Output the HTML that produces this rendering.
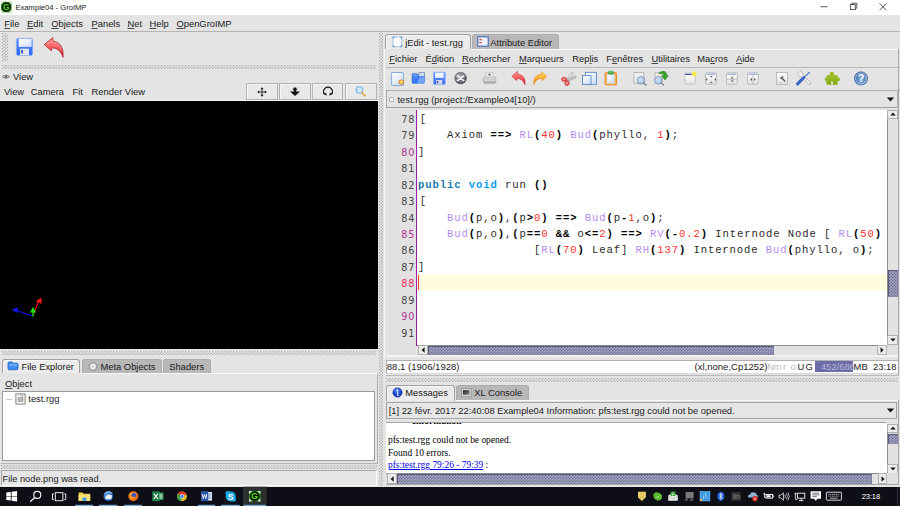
<!DOCTYPE html>
<html>
<head>
<meta charset="utf-8">
<title>Example04 - GroIMP</title>
<style>
html,body{margin:0;padding:0;}
body{width:900px;height:506px;overflow:hidden;background:#e4e4e4;font-family:"Liberation Sans",sans-serif;font-size:9.35px;color:#1a1a1a;position:relative;}
.a{position:absolute;}
.t{position:absolute;white-space:pre;line-height:12px;}
u{text-decoration:underline;text-underline-offset:1px;text-decoration-thickness:1px;text-decoration-color:#484848;}
.dots{position:absolute;background-color:#e9e9e9;background-image:radial-gradient(circle at 0.75px 0.75px,#b4b4b4 0.55px,rgba(180,180,180,0) 1.05px),radial-gradient(circle at 2.25px 2.25px,#b4b4b4 0.55px,rgba(180,180,180,0) 1.05px);background-size:3px 3px;}
.code{position:absolute;white-space:pre;font-family:"Liberation Mono",monospace;font-size:10.6px;letter-spacing:0.885px;line-height:16.45px;left:418.1px;color:#2a2a2a;height:16.45px;margin-top:1.1px;}
.ln{position:absolute;left:385px;width:30.3px;text-align:right;font-family:"DejaVu Sans","Liberation Sans",sans-serif;font-size:9.7px;letter-spacing:0.85px;line-height:16.45px;color:#484848;margin-top:2px;}
.k{color:#187aac;font-weight:bold;}
.k2{color:#0aa0f0;font-weight:bold;}
.f{color:#b48cf0;}
.n{color:#ff3030;}
.o{font-weight:bold;color:#000;}
.tab{position:absolute;box-sizing:border-box;border:1px solid #a0a0a0;border-bottom:none;border-radius:3px 3px 0 0;}
.tab.on{background:#ebebeb;box-shadow:inset 1px 1px 0 #f8f8f8;}
.tab.off{background:#b8b8b8;border-color:#acacac;}
.msg{position:absolute;white-space:pre;font-family:"Liberation Serif",serif;font-size:9.45px;line-height:12px;color:#000;}
.vbtn{box-sizing:border-box;background:#e8e8e8;border:1px solid #b2b2b2;box-shadow:inset 1px 1px 0 #f6f6f6;}
.sbtn{box-sizing:border-box;background:#ececec;border:1px solid #b0b0b0;}
.thumb{box-sizing:border-box;border:1px solid #5a5a76;border-right-color:#7c7c9c;border-bottom-color:#8c8cac;background-color:#a6a6c8;background-image:radial-gradient(circle at 0.75px 0.75px,#6e6e92 0.55px,rgba(110,110,146,0) 1px),radial-gradient(circle at 2.25px 2.25px,#6e6e92 0.55px,rgba(110,110,146,0) 1px);background-size:3px 3px;}
</style>
</head>
<body>
<!-- TITLE BAR -->
<div class="a" id="titlebar" style="left:0;top:0;width:900px;height:15px;background:#fff;"></div>
<svg class="a" style="left:0;top:0" width="14" height="15" viewBox="0 0 14 15"><rect x="1" y="1.8" width="10.6" height="10.6" fill="#2a8a18"/><path d="M1 1.8h2.8l-2.8 2.8zM11.6 1.8h-2.8l2.8 2.8zM1 12.4h2.8l-2.8-2.8zM11.6 12.4h-2.8l2.8-2.8z" fill="#e8f0e0"/><circle cx="6.3" cy="7.1" r="4.5" fill="#0a0a0a"/><text x="6.3" y="10.2" font-family="Liberation Sans, sans-serif" font-weight="bold" font-size="8.4" fill="#58e020" text-anchor="middle">G</text></svg>
<div class="t" style="left:15.5px;top:1.5px;font-size:7.6px;color:#222;line-height:12px;">Example04 - GroIMP</div>
<svg class="a" style="left:815px;top:0" width="85" height="15" viewBox="0 0 85 15" fill="none" stroke="#333" stroke-width="0.8">
<path d="M5.5 6.7h7"/><rect x="35.3" y="4.6" width="5" height="5"/><path d="M36.8 4.6v-1.4h5v5h-1.4"/><path d="M64.5 3.3l7 7M71.5 3.3l-7 7"/></svg>

<!-- MAIN MENU -->
<div class="a" style="left:0;top:15px;width:900px;height:16px;background:#e4e4e4;"></div>
<div class="a" style="left:0;top:31px;width:900px;height:1px;background:#b4b4b4;"></div>
<div class="t" style="left:4.3px;top:17.7px;"><u>F</u>ile</div>
<div class="t" style="left:27px;top:17.7px;"><u>E</u>dit</div>
<div class="t" style="left:51.3px;top:17.7px;"><u>O</u>bjects</div>
<div class="t" style="left:91.5px;top:17.7px;"><u>P</u>anels</div>
<div class="t" style="left:127.5px;top:17.7px;"><u>N</u>et</div>
<div class="t" style="left:149.5px;top:17.7px;"><u>H</u>elp</div>
<div class="t" style="left:176.5px;top:17.7px;"><u>O</u>penGroIMP</div>

<!-- MAIN TOOLBAR -->
<div class="dots" style="left:2px;top:33px;width:5.8px;height:28.6px;"></div>
<svg class="a" style="left:14px;top:36px" width="54" height="24" viewBox="0 0 54 24">
<defs><linearGradient id="sv" x1="0" y1="0" x2="0" y2="1"><stop offset="0" stop-color="#5a94ff"/><stop offset="1" stop-color="#2a62f4"/></linearGradient>
<linearGradient id="lb" x1="0" y1="0" x2="1" y2="1"><stop offset="0" stop-color="#ffffff"/><stop offset="1" stop-color="#d4dcff"/></linearGradient>
<linearGradient id="rd" x1="0" y1="0" x2="0" y2="1"><stop offset="0" stop-color="#ff8c8c"/><stop offset="0.4" stop-color="#ff6a6a"/><stop offset="1" stop-color="#c41222"/></linearGradient></defs>
<rect x="2.4" y="2.4" width="16.2" height="17" rx="1.6" fill="url(#sv)" stroke="#86aaff" stroke-width="0.8"/>
<rect x="4.7" y="2.9" width="12.9" height="8" fill="url(#lb)"/>
<rect x="6" y="12.7" width="9" height="6.6" fill="#e0e2ee"/><rect x="7.2" y="14" width="1.8" height="3.4" fill="#2a4ce0"/>
<path d="M30.300 8.600 L38.800 1.600 L39 5.200 C46 5.800 50 12 49 21.400 C47 15.500 44 12.200 38 11.800 L37.400 14.800 Z" fill="url(#rd)" stroke="#a81622" stroke-width="0.7" stroke-linejoin="round"/>
<path d="M33 8.400 L38 4.400 L38.200 6.400 C43 6.800 46 10 47 14" fill="none" stroke="#ffb4b4" stroke-width="0.9" opacity="0.8"/>
</svg>

<!-- LEFT PANEL -->
<div class="dots" style="left:2px;top:65px;width:374px;height:4px;"></div>
<svg class="a" style="left:2px;top:73.6px" width="8" height="6.4" viewBox="0 0 10 8"><path d="M0.6 3.6 Q5 -0.6 9.4 3.6 Q5 7.2 0.6 3.6Z" fill="none" stroke="#555" stroke-width="1"/><circle cx="5" cy="3.4" r="1.4" fill="#555"/></svg>
<div class="t" style="left:13px;top:70.5px;">View</div>
<div class="t" style="left:4px;top:85.6px;">View</div>
<div class="t" style="left:30.8px;top:85.6px;">Camera</div>
<div class="t" style="left:72.5px;top:85.6px;">Fit</div>
<div class="t" style="left:91.6px;top:85.6px;">Render View</div>
<div class="a vbtn" style="left:246px;top:83px;width:31.6px;height:16.7px;"></div>
<div class="a vbtn" style="left:279.2px;top:83px;width:31.6px;height:16.7px;"></div>
<div class="a vbtn" style="left:312.3px;top:83px;width:31.2px;height:16.7px;"></div>
<div class="a vbtn" style="left:345.3px;top:83px;width:31.7px;height:16.7px;"></div>
<svg class="a" style="left:257.2px;top:86.5px" width="10" height="10" viewBox="0 0 12 12"><path d="M6 1.600v8.800M1.600 6h8.800" stroke="#111" stroke-width="1"/><path d="M6 0.300l1.900 2.300h-3.800zM6 11.700l1.900-2.300h-3.800zM0.300 6l2.300-1.900v3.800zM11.700 6l-2.300-1.900v3.800z" fill="#111"/></svg>
<svg class="a" style="left:289px;top:86px" width="12" height="12" viewBox="0 0 12 12"><path d="M4.7 1.5h2.6v4.3h-2.6z" fill="#111"/><path d="M3.7 2.7h4.6v1h-4.6z" fill="#111"/><path d="M1 5.6h10L6 9.9z" fill="#111"/></svg>
<svg class="a" style="left:322.1px;top:85.3px" width="12" height="12" viewBox="0 0 12 12"><path d="M2.6 9.4 A4.4 4.4 0 1 1 9.4 9.4" fill="none" stroke="#111" stroke-width="1.3"/><path d="M0.8 8.2h3.6v2.6zM11.2 8.2h-3.6v2.6z" fill="#111"/></svg>
<svg class="a" style="left:354px;top:85px" width="14" height="13" viewBox="0 0 14 13"><circle cx="5.4" cy="5" r="3.3" fill="#cfe6fa" stroke="#7eb4e6" stroke-width="1.1"/><path d="M7.9 7.6l3.3 3.3" stroke="#e8a848" stroke-width="1.7" stroke-linecap="round"/></svg>
<div class="a" style="left:0;top:99.8px;width:377.5px;height:1px;background:#f6f6f6;"></div>
<div class="a" style="left:0;top:100.7px;width:377.5px;height:248.5px;background:#000;"></div>
<svg class="a" style="left:8px;top:292px" width="40" height="30" viewBox="0 0 40 30">
<path d="M25 23.5 L31 8" stroke="#e01010" stroke-width="1.2"/><path d="M27.6 9.2 L33.4 5.4 L33.6 12 Z" fill="#f01818"/>
<path d="M25 24 L8 18.5" stroke="#1010f0" stroke-width="1.2"/><path d="M4 17.2 L10.2 15.6 L8.8 21.2 Z" fill="#1414ff"/>
<path d="M25 24.5 L25 18" stroke="#10c010" stroke-width="1.6"/><path d="M22 20.5 L25 14.8 L28 20.5 Z" fill="#14e014"/>
</svg>
<div class="dots" style="left:2px;top:351px;width:374px;height:4px;"></div>

<!-- left-bottom tabs -->
<div class="tab on" style="left:1.8px;top:358.8px;width:78.7px;height:14.7px;"></div>
<div class="tab off" style="left:81.5px;top:358.8px;width:80.5px;height:14.2px;"></div>
<div class="tab off" style="left:163px;top:358.8px;width:48px;height:14.2px;"></div>
<div class="a" style="left:80.5px;top:372.900px;width:296.500px;height:1px;background:#f8f8f8;"></div>
<div class="a" style="left:376.600px;top:373.500px;width:1px;height:90px;background:#b0b0b0;"></div>
<div class="a" style="left:1px;top:462.600px;width:376px;height:1px;background:#b4b4b4;"></div>
<div class="t" style="left:21.5px;top:360.5px;">File Explorer</div>
<div class="t" style="left:100.5px;top:360.5px;">Meta Objects</div>
<div class="t" style="left:169.3px;top:360.5px;">Shaders</div>
<svg class="a" style="left:7px;top:361px" width="12" height="10" viewBox="0 0 12 10"><path d="M1 2.2 Q1 1 2.2 1 H5 L6 2.2 H9.8 Q11 2.2 11 3.4 V7.6 Q11 8.8 9.8 8.8 H2.2 Q1 8.8 1 7.6Z" fill="#3f8df0" stroke="#1c5fc0" stroke-width="0.8"/><path d="M2 4h8" stroke="#9cc8ff" stroke-width="1"/></svg>
<svg class="a" style="left:87px;top:360.6px" width="12" height="11" viewBox="0 0 12 11"><circle cx="6" cy="5.5" r="3.6" fill="none" stroke="#9a9a9a" stroke-width="2.4" stroke-dasharray="1.7 1.13"/><circle cx="6" cy="5.5" r="3.1" fill="#fafafa" stroke="#a8a8a8" stroke-width="0.6"/><circle cx="6" cy="5.5" r="1.1" fill="#d8d8d8" stroke="#a8a8a8" stroke-width="0.4"/></svg>
<div class="t" style="left:5px;top:377.9px;"><u>O</u>bject</div>
<div class="a" style="left:1.5px;top:391px;width:373.5px;height:69.5px;background:#fff;border:1px solid #9a9a9a;box-sizing:border-box;"></div>
<div class="a" style="left:6px;top:398.5px;width:6px;height:1px;background:#c0c8d8;"></div>
<svg class="a" style="left:14.5px;top:393px" width="11" height="12" viewBox="0 0 11 12"><rect x="0.9" y="0.9" width="9.2" height="10.2" fill="#f4f4f4" stroke="#666" stroke-width="0.8"/><rect x="3" y="4.8" width="5" height="3.6" fill="#bbb" stroke="#777" stroke-width="0.5"/><path d="M4.6 2.2h3v2.4" fill="none" stroke="#888" stroke-width="0.6"/></svg>
<div class="t" style="left:28.3px;top:392.8px;">test.rgg</div>
<div class="dots" style="left:0.5px;top:465px;width:376px;height:4.2px;"></div>
<div class="a" style="left:0.5px;top:470.4px;width:376.5px;height:15.2px;border:1px solid #a8a8a8;border-right-color:#fafafa;border-bottom-color:#fafafa;box-sizing:border-box;background:#e6e6e6;"></div>
<div class="t" style="left:2.5px;top:472.8px;font-size:9.25px;">File node.png was read.</div>

<!-- VERTICAL DIVIDER -->
<div class="dots" style="left:378.5px;top:33px;width:4.5px;height:453px;"></div>

<!-- RIGHT PANEL : jEdit -->
<div class="tab on" style="left:385px;top:34.2px;width:85.8px;height:15.3px;"></div>
<div class="tab off" style="left:471.7px;top:34.2px;width:87.8px;height:14.8px;"></div>
<div class="a" style="left:470.800px;top:48.800px;width:427.500px;height:1px;background:#f8f8f8;"></div>
<div class="a" style="left:384.4px;top:49px;width:1px;height:310px;background:#f6f6f6;"></div>
<svg class="a" style="left:392px;top:35.500px" width="11" height="12" viewBox="0 0 11 12"><rect x="1" y="0.900" width="8.800" height="9.800" rx="0.800" fill="#fbfcfe" stroke="#9abce6" stroke-width="0.900"/><path d="M1 2.500v-1.600h1.600M8.200 0.900h1.600v1.600M9.800 9.100v1.600h-1.600M2.600 10.700h-1.600v-1.600" fill="none" stroke="#5a88cc" stroke-width="0.900"/></svg>
<div class="t" style="left:405.3px;top:36.6px;">jEdit - test.rgg</div>
<svg class="a" style="left:476.5px;top:36px" width="12" height="11" viewBox="0 0 12 11"><rect x="0.8" y="0.8" width="10.4" height="9.4" fill="#e8ecf8" stroke="#3a5fb8" stroke-width="1"/><path d="M2.4 3.6h2.4M2.4 6.6h2.4" stroke="#e05030" stroke-width="1.2"/><path d="M5.6 3.6h4M5.6 6.6h4" stroke="#fff" stroke-width="1.2"/></svg>
<div class="t" style="left:490.3px;top:36.6px;">Attribute Editor</div>

<div class="t" style="left:389.3px;top:52.9px;"><u>F</u>ichier</div>
<div class="t" style="left:425.5px;top:52.9px;">É<u>d</u>ition</div>
<div class="t" style="left:462px;top:52.9px;"><u>R</u>echercher</div>
<div class="t" style="left:519px;top:52.9px;"><u>M</u>arqueurs</div>
<div class="t" style="left:572.3px;top:52.9px;">Rep<u>l</u>is</div>
<div class="t" style="left:606.3px;top:52.9px;">F<u>e</u>nêtres</div>
<div class="t" style="left:651.5px;top:52.9px;"><u>U</u>tilitaires</div>
<div class="t" style="left:697.3px;top:52.9px;">Ma<u>c</u>ros</div>
<div class="t" style="left:736px;top:52.9px;"><u>A</u>ide</div>
<div class="a" style="left:386px;top:66.5px;width:514px;height:1px;background:#b8b8b8;"></div>
<svg class="a" style="left:386px;top:67px" width="514" height="23" viewBox="386 67 514 23">
<defs>
<linearGradient id="pg" x1="0" y1="0" x2="1" y2="1"><stop offset="0" stop-color="#ffffff"/><stop offset="1" stop-color="#c8dcf4"/></linearGradient>
<linearGradient id="prn" x1="0" y1="0" x2="0" y2="1"><stop offset="0" stop-color="#dcdcdc"/><stop offset="0.500" stop-color="#c4c4c4"/><stop offset="1" stop-color="#a4a4a4"/></linearGradient>
<radialGradient id="lens" cx="0.400" cy="0.400" r="0.700"><stop offset="0" stop-color="#d4e6f8"/><stop offset="1" stop-color="#94b8e0"/></radialGradient>
<linearGradient id="win" x1="0" y1="0" x2="0" y2="1"><stop offset="0" stop-color="#ffffff"/><stop offset="1" stop-color="#e2e2e2"/></linearGradient>
<linearGradient id="pz" x1="0" y1="0" x2="0" y2="1"><stop offset="0" stop-color="#a8c828"/><stop offset="1" stop-color="#86aa14"/></linearGradient>
<linearGradient id="bl2" x1="0" y1="0" x2="0" y2="1"><stop offset="0" stop-color="#6a9cff"/><stop offset="1" stop-color="#3466f2"/></linearGradient>
<linearGradient id="bl" x1="0" y1="0" x2="0" y2="1"><stop offset="0" stop-color="#6aa6ff"/><stop offset="1" stop-color="#1450d8"/></linearGradient>
<linearGradient id="rd2" x1="0" y1="0" x2="0" y2="1"><stop offset="0" stop-color="#ff9090"/><stop offset="0.4" stop-color="#ff6a6a"/><stop offset="1" stop-color="#c41222"/></linearGradient>
<linearGradient id="or" x1="0" y1="0" x2="0" y2="1"><stop offset="0" stop-color="#ffd478"/><stop offset="0.4" stop-color="#ffb840"/><stop offset="1" stop-color="#ec8408"/></linearGradient>
<radialGradient id="gy" cx="0.4" cy="0.35" r="0.7"><stop offset="0" stop-color="#b4b4c0"/><stop offset="0.600" stop-color="#72727e"/><stop offset="1" stop-color="#44444e"/></radialGradient>
<radialGradient id="hb" cx="0.55" cy="0.6" r="0.75"><stop offset="0" stop-color="#86b0de"/><stop offset="1" stop-color="#2a589c"/></radialGradient>
</defs>
<rect x="391.6" y="72.5" width="11.8" height="13" rx="0.6" fill="url(#pg)" stroke="#6a98d4" stroke-width="0.8"/>
<path d="M401.3 78.400l1.100 2.100 2.300-.400-1.300 2 1.300 2-2.300-.400-1.100 2.100-1.100-2.100-2.300.400 1.300-2-1.300-2 2.300.400z" fill="#e08a38"/><circle cx="401.3" cy="82.100" r="1.500" fill="#ffe45c"/>
<path d="M412 74.300 q0-.900 .900-.900 h3.800 l1.200 1.400 h6.400 v7.400 q0 .900 -.900 .900 h-10.500 q-.900 0 -.900 -.900z" fill="url(#bl)" stroke="#0e3ca8" stroke-width="0.400"/><rect x="418.900" y="72.500" width="5.600" height="6.700" fill="#cadcf6" stroke="#56647e" stroke-width="0.500"/>
<path d="M412.200 77.200 h5.600 l1-1.200 h5.600 v7 q0 .800 -.800 .800 h-10.600 q-.800 0 -.800 -.800z" fill="#3f82f4" opacity="0.800"/><path d="M418 80 q3.500-2.600 6.300-2.400 v5.500 q0 .700-.700 .700 h-5.600z" fill="#9cc4ff" opacity="0.550"/>
<rect x="433.400" y="72.100" width="11.900" height="12.300" rx="0.900" fill="url(#bl2)" stroke="#96b4ff" stroke-width="0.700"/><rect x="435" y="72.700" width="8.700" height="5.200" fill="#eef2ff"/><rect x="436.300" y="80" width="5.900" height="4.300" fill="#dcdce6"/><rect x="437.100" y="81" width="1.200" height="2.300" fill="#2a50d8"/>
<circle cx="460.600" cy="78.100" r="5.900" fill="url(#gy)" stroke="#4a4a56" stroke-width="0.500"/><path d="M457.500 75.800l6.200 4.800M463.700 75.800l-6.200 4.800" stroke="#f6f6f6" stroke-width="1.700" stroke-linecap="round"/>
<rect x="485.800" y="72.300" width="7.400" height="5.600" fill="#e8e8e8" stroke="#bcbcbc" stroke-width="0.500"/><path d="M489.500 73.300v2.600M488.300 74.500h2.400" stroke="#555" stroke-width="0.700"/><rect x="483.200" y="77" width="12.800" height="6.200" rx="1.400" fill="url(#prn)" stroke="#9c9c9c" stroke-width="0.400"/><path d="M484 80.300h11.200" stroke="#ececec" stroke-width="0.700"/><path d="M484.600 83.700h10" stroke="#bdbdbd" stroke-width="1"/>
<path d="M511.8 76.3 L517.6 71.4 L517.4 74 C523 74.6 525.8 78.6 525 84.8 C523.4 80.6 521.2 78.6 517 78.4 L516.6 80.6 Z" fill="url(#rd2)" stroke="#c01420" stroke-width="0.5" stroke-linejoin="round"/>
<path d="M547 76.3 L541.2 71.4 L541.4 74 C535.8 74.6 533 78.6 533.8 84.8 C535.4 80.6 537.6 78.6 541.8 78.4 L542.2 80.6 Z" fill="url(#or)" stroke="#e08a18" stroke-width="0.5" stroke-linejoin="round"/>
<path d="M571.800 72 L573.300 73 L568 81.600 L566 80.400Z" fill="#ececec" stroke="#909090" stroke-width="0.500"/><path d="M575.700 75.900 L576 77.700 L566.400 81.800 L565.600 80Z" fill="#c8c8c8" stroke="#8c8c8c" stroke-width="0.500"/><ellipse cx="564" cy="79.300" rx="2.500" ry="2" fill="#e85a5a" stroke="#cc2a34" stroke-width="0.700"/><ellipse cx="564" cy="79.300" rx="0.900" ry="0.700" fill="#f4c8c8"/><ellipse cx="567" cy="83.100" rx="2.200" ry="2.500" fill="#e85a5a" stroke="#cc2a34" stroke-width="0.700"/><ellipse cx="567" cy="83.100" rx="0.800" ry="0.900" fill="#f4c8c8"/>
<rect x="585.6" y="72.3" width="11" height="12" fill="url(#pg)" stroke="#4a80c8" stroke-width="0.8"/><rect x="582.4" y="75.6" width="8.6" height="9" fill="url(#pg)" stroke="#4a80c8" stroke-width="0.8"/>
<rect x="605.200" y="72.800" width="11.200" height="12" rx="0.400" fill="#f8b860" stroke="#ee8418" stroke-width="1"/><rect x="607" y="74.400" width="7.600" height="9.200" fill="url(#pg)" stroke="#b8c8e0" stroke-width="0.400"/><rect x="608.300" y="71.200" width="5.200" height="3" rx="1.200" fill="#34b444" stroke="#248a34" stroke-width="0.400"/><path d="M609.300 72.100h3.200" stroke="#a4eaa8" stroke-width="0.600"/>
<rect x="634" y="72.400" width="9.800" height="10.800" fill="#f0f0f0" stroke="#a6a6a6" stroke-width="0.700"/><circle cx="640.900" cy="80.300" r="3.800" fill="url(#lens)" stroke="#8090a8" stroke-width="0.800"/><path d="M643.900 83.200l2.200 1.900" stroke="#808088" stroke-width="1.400" stroke-linecap="round"/>
<rect x="655" y="72.400" width="7" height="9" fill="#f0f0f0" stroke="#a6a6a6" stroke-width="0.700"/><path d="M658.400 74 C661.500 69.600 667.400 70.800 666.800 75.800 L668.400 75.800 L665 80 L661.600 75.800 L663.600 75.800 C663.800 73.600 661.600 72.800 658.400 74Z" fill="#3aa42a" stroke="#207818" stroke-width="0.500"/><circle cx="658.400" cy="80.300" r="3.900" fill="url(#lens)" stroke="#8090a8" stroke-width="0.800"/><path d="M661.500 83.200l2.100 1.800" stroke="#808088" stroke-width="1.400" stroke-linecap="round"/>
<rect x="684.700" y="73.300" width="10.600" height="10.800" rx="0.600" fill="url(#win)" stroke="#b8b8b8" stroke-width="0.700"/><path d="M685 74.300h8" stroke="#2848a0" stroke-width="1.100"/><circle cx="694.200" cy="74" r="2.900" fill="#fff27a" opacity="0.500"/><circle cx="694.200" cy="74" r="1.900" fill="#ffe838"/>
<rect x="705.500" y="72.800" width="10.800" height="11.400" rx="0.800" fill="url(#win)" stroke="#a8a8a8" stroke-width="0.700"/><path d="M706.400 74.200h9" stroke="#7090c8" stroke-width="0.900"/><path d="M709.900 76l1.400 1.500 1.400-1.500zM709.900 82.900l1.400-1.500 1.400 1.500zM706.100 78.100l1.600 1.400-1.600 1.400zM716 78.100l-1.600 1.400 1.600 1.400z" fill="#5c5c5c"/>
<rect x="726.500" y="72.800" width="10.800" height="11.400" rx="0.800" fill="url(#win)" stroke="#a8a8a8" stroke-width="0.700"/><path d="M727.400 74.200h9" stroke="#7090c8" stroke-width="0.900"/><path d="M727 79.400h10" stroke="#9a9a9a" stroke-width="0.500"/><path d="M730.700 78.500l1.500-1.900 1.500 1.900zM730.700 80.400l1.500 1.900 1.500-1.900z" fill="#5c5c5c"/>
<rect x="747.500" y="72.800" width="10.800" height="11.400" rx="0.800" fill="url(#win)" stroke="#a8a8a8" stroke-width="0.700"/><path d="M748.400 74.200h9" stroke="#7090c8" stroke-width="0.900"/><path d="M752.900 75v9" stroke="#9a9a9a" stroke-width="0.500"/><path d="M752 78l-1.900 1.500 1.900 1.500zM753.900 78l1.900 1.500-1.900 1.500z" fill="#5c5c5c"/>
<rect x="776.600" y="72.500" width="10.800" height="11.800" fill="url(#win)" stroke="#b0b0b0" stroke-width="0.800"/><path d="M781.400 77.400 l3.400 3.600" stroke="#5a5a5a" stroke-width="1.400" stroke-linecap="round"/><path d="M780 77.800 a1.500 1.500 0 1 0 2-2" fill="none" stroke="#5a5a5a" stroke-width="1"/><path d="M778.200 82.800h4" stroke="#cccccc" stroke-width="0.700"/>
<path d="M801 75 L809.400 83.200" stroke="#9c9c9c" stroke-width="3" stroke-linecap="round"/><circle cx="800.400" cy="73.900" r="2.500" fill="#f2f2f2" stroke="#9c9c9c" stroke-width="0.600"/><path d="M801 75 L809.400 83.200" stroke="#f2f2f2" stroke-width="1.900" stroke-linecap="round"/><path d="M800.300 73.800 L797.600 71.100" stroke="#e4e4e4" stroke-width="1.600"/><path d="M809.500 72.300 L804 77.400" stroke="#4a78c0" stroke-width="1.200" stroke-linecap="round"/><path d="M803.600 77.800 L797.600 83.900" stroke="#2a5cc0" stroke-width="3" stroke-linecap="round"/><path d="M803 78.400 L798 83.500" stroke="#86acf0" stroke-width="0.700" stroke-dasharray="1 0.600"/>
<path d="M826.700 75.600h4.300 a2 2 0 1 1 2 0 h4.300 v2.600 a1.600 1.600 0 1 1 0 2.400 v3.900 h-10.600 v-3.900 a1.300 1.300 0 1 1 0-2.400z" fill="url(#pz)" stroke="#86a614" stroke-width="0.400"/><path d="M831.300 84.400 v-1.200 a1.100 1.100 0 1 1 1.500 0 v1.200z" fill="#e8ecd8"/>
<circle cx="861" cy="78.400" r="6.700" fill="url(#hb)" stroke="#2c5694" stroke-width="0.500"/><circle cx="861" cy="78.400" r="5.500" fill="none" stroke="#e4ecf8" stroke-width="0.700" opacity="0.800"/>
<text x="861.100" y="82.300" font-family="Liberation Sans, sans-serif" font-weight="bold" font-size="10.800" fill="#fff" text-anchor="middle">?</text>
</svg>
<div class="a" style="left:385.5px;top:90.2px;width:514.5px;height:1px;background:#acacac;"></div>
<div class="a" style="left:385.5px;top:90.2px;width:1px;height:18px;background:#acacac;"></div>

<div class="a" style="left:898px;top:49px;width:1px;height:326.5px;background:#a8a8a8;"></div>
<div class="a" style="left:386px;top:375px;width:513px;height:1px;background:#b8b8b8;"></div>
<div class="a" style="left:898px;top:400px;width:1px;height:85px;background:#a8a8a8;"></div>
<!-- buffer selector -->
<div class="a" style="left:389.4px;top:96.7px;width:5px;height:5px;border:0.8px solid #b0b0b0;border-radius:1px;background:#fcfcfc;box-sizing:border-box;"></div>
<div class="t" style="left:397.5px;top:94px;">test.rgg (project:/Example04[10]/)</div>
<svg class="a" style="left:886px;top:97px" width="9" height="5" viewBox="0 0 9 5"><path d="M0.8 0.6h7.4L4.5 4.4Z" fill="#111"/></svg>
<div class="a" style="left:385.5px;top:107px;width:511.5px;height:1px;background:#a2a2a2;"></div>
<div class="a" style="left:896.5px;top:91px;width:1px;height:17px;background:#b0b0b0;"></div>

<!-- editor -->
<div class="a" style="left:386px;top:109.5px;width:501px;height:236px;background:#fff;"></div>
<div class="a" style="left:386px;top:109.5px;width:30px;height:246px;background:#e1e1e1;"></div>
<div class="a" style="left:415.9px;top:109.5px;width:1.3px;height:236px;background:#a218a8;"></div>
<div class="a" style="left:417px;top:274.3px;width:470px;height:16.4px;background:#fffce0;"></div>
<div class="a" style="left:417.6px;top:275px;width:1px;height:15px;background:#f04444;"></div>
<div class="ln" style="top:109.80px;">78</div>
<div class="code" style="top:109.80px;padding-left:1.6px;">[</div>
<div class="ln" style="top:126.25px;">79</div>
<div class="code" style="top:126.25px;">    Axiom <span class="o">==&gt;</span> <span class="f">RL</span><span class="o">(</span><span class="n">40</span><span class="o">)</span> <span class="f">Bud</span><span class="o">(</span>phyllo, <span class="n">1</span><span class="o">)</span>;</div>
<div class="ln" style="top:142.70px;color:#b43494;">80</div>
<div class="code" style="top:142.70px;">]</div>
<div class="ln" style="top:159.15px;">81</div>
<div class="ln" style="top:175.60px;">82</div>
<div class="code" style="top:175.60px;"><span class="k">public</span> <span class="k2">void</span> run <span class="o">()</span></div>
<div class="ln" style="top:192.05px;">83</div>
<div class="code" style="top:192.05px;padding-left:1.6px;">[</div>
<div class="ln" style="top:208.50px;">84</div>
<div class="code" style="top:208.50px;">    <span class="f">Bud</span><span class="o">(</span>p,o<span class="o">)</span>,<span class="o">(</span>p<span class="o">&gt;</span><span class="n">0</span><span class="o">)</span> <span class="o">==&gt;</span> <span class="f">Bud</span><span class="o">(</span>p<span class="o">-</span><span class="n">1</span>,o<span class="o">)</span>;</div>
<div class="ln" style="top:224.95px;color:#b43494;">85</div>
<div class="code" style="top:224.95px;">    <span class="f">Bud</span><span class="o">(</span>p,o<span class="o">)</span>,<span class="o">(</span>p<span class="o">==</span><span class="n">0</span> <span class="o">&amp;&amp;</span> o<span class="o">&lt;=</span><span class="n">2</span><span class="o">)</span> <span class="o">==&gt;</span> <span class="f">RV</span><span class="o">(-</span><span class="n">0.2</span><span class="o">)</span> Internode Node [ <span class="f">RL</span><span class="o">(</span><span class="n">50</span><span class="o">)</span></div>
<div class="ln" style="top:241.40px;">86</div>
<div class="code" style="top:241.40px;">                [<span class="f">RL</span><span class="o">(</span><span class="n">70</span><span class="o">)</span> Leaf] <span class="f">RH</span><span class="o">(</span><span class="n">137</span><span class="o">)</span> Internode <span class="f">Bud</span><span class="o">(</span>phyllo, o<span class="o">)</span>;</div>
<div class="ln" style="top:257.85px;">87</div>
<div class="code" style="top:257.85px;">]</div>
<div class="ln" style="top:274.30px;color:#f03058;">88</div>
<div class="ln" style="top:290.75px;">89</div>
<div class="ln" style="top:307.20px;color:#b43494;">90</div>
<div class="ln" style="top:323.65px;">91</div>

<!-- editor scrollbars -->
<div class="a" style="left:887px;top:109.5px;width:10.5px;height:236px;background:#e2e2e2;border-left:1px solid #8c8c8c;box-sizing:border-box;"></div>
<div class="a sbtn" style="left:887px;top:109.5px;width:10.5px;height:9.5px;"></div>
<svg class="a" style="left:889.75px;top:112.05px" width="6" height="4.2" viewBox="0 0 7 5"><path d="M0.3 4.3h6.4L3.5 0.7Z" fill="#111"/></svg>
<div class="a thumb" style="left:887.5px;top:270.4px;width:10px;height:27px;"></div>
<div class="a sbtn" style="left:887px;top:335px;width:10.5px;height:10px;"></div>
<svg class="a" style="left:889.75px;top:338.45px" width="6" height="4.2" viewBox="0 0 7 5"><path d="M0.3 0.7h6.4L3.5 4.3Z" fill="#111"/></svg>
<div class="a" style="left:417px;top:345.3px;width:470px;height:9.7px;background:#e2e2e2;border-top:1px solid #8c8c8c;box-sizing:border-box;"></div>
<div class="a sbtn" style="left:418.4px;top:345.3px;width:10px;height:9.7px;"></div>
<svg class="a" style="left:421.05px;top:347.35px" width="4.2" height="6" viewBox="0 0 5 7"><path d="M4.3 0.3v6.4L0.7 3.5Z" fill="#111"/></svg>
<div class="a thumb" style="left:428.4px;top:345.8px;width:345.4px;height:9px;"></div>
<div class="a sbtn" style="left:877px;top:345.3px;width:10px;height:9.7px;"></div>
<svg class="a" style="left:880.45px;top:347.35px" width="4.2" height="6" viewBox="0 0 5 7"><path d="M0.7 0.3v6.4L4.3 3.5Z" fill="#111"/></svg>
<div class="a" style="left:887px;top:345.3px;width:10.5px;height:9.7px;background:#e0e0e0;"></div>

<div class="a" style="left:386px;top:355.2px;width:512px;height:1.4px;background:#f3f3f3;"></div>
<!-- jEdit status -->
<div class="a" style="left:386px;top:359.500px;width:512px;height:14.600px;background:#fff;border:1px solid #b0b0b0;border-right:none;border-bottom-color:#d8d8d8;box-sizing:border-box;"></div>
<div class="t" style="left:386.8px;top:361px;font-size:9.55px;">88,1 (1906/1928)</div>
<div class="t" style="left:694.6px;top:361px;font-size:9.5px;">(xl,none,Cp1252)</div>
<div class="t" style="left:767.3px;top:361px;color:#bcbcbc;">N</div>
<div class="t" style="left:773.6px;top:361px;color:#bcbcbc;">m</div>
<div class="t" style="left:783px;top:361px;color:#bcbcbc;">r</div>
<div class="t" style="left:790.5px;top:361px;color:#bcbcbc;">o</div>
<div class="t" style="left:797.6px;top:361px;">U</div>
<div class="t" style="left:805.6px;top:361px;">G</div>
<div class="a" style="left:815.2px;top:361.200px;width:37.600px;height:10.800px;background:#6c6ca8;"></div>
<div class="t" style="left:821px;top:361px;color:#b9b9dc;">452/686</div>
<div class="t" style="left:853.6px;top:361px;">MB</div>
<div class="t" style="left:873px;top:361px;">23:18</div>

<!-- bottom right -->
<div class="dots" style="left:386px;top:377.600px;width:512px;height:4.200px;"></div>
<div class="tab on" style="left:385.6px;top:385px;width:69.6px;height:15.5px;"></div>
<div class="tab off" style="left:456px;top:385px;width:73px;height:15px;"></div>
<div class="a" style="left:455px;top:399.800px;width:443px;height:1px;background:#f8f8f8;"></div>
<svg class="a" style="left:391.700px;top:387px" width="11" height="11" viewBox="0 0 11 11"><defs><radialGradient id="inf" cx="0.450" cy="0.300" r="0.800"><stop offset="0" stop-color="#5a8cf0"/><stop offset="0.500" stop-color="#2048d0"/><stop offset="1" stop-color="#0c249c"/></radialGradient></defs><circle cx="5.500" cy="5.500" r="4.700" fill="url(#inf)" stroke="#10289c" stroke-width="0.400"/><path d="M4.600 4.600h1.700v3.600h0.700v0.500h-2.400v-0.500h0.700v-3.100h-0.700z" fill="#fff"/><circle cx="5.500" cy="3" r="0.850" fill="#fff"/></svg>
<div class="t" style="left:405.3px;top:386.8px;">Messages</div>
<svg class="a" style="left:461px;top:388px" width="11" height="10" viewBox="0 0 11 10"><defs><linearGradient id="scr" x1="0" y1="0" x2="1" y2="1"><stop offset="0" stop-color="#1c1c1c"/><stop offset="1" stop-color="#8c8c8c"/></linearGradient></defs><rect x="0.600" y="0.600" width="9.600" height="8.200" fill="#d4d4d4" stroke="#8a8a8a" stroke-width="0.700"/><rect x="1.900" y="2.200" width="6.600" height="4.600" fill="url(#scr)"/></svg>
<div class="t" style="left:474.3px;top:386.8px;">XL Console</div>
<div class="a" style="left:386px;top:402px;width:511px;height:17px;border:1px solid #a4a4a4;box-sizing:border-box;background:#e6e6e6;"></div>
<div class="t" style="left:388.7px;top:404.5px;">[1] 22 févr. 2017 22:40:08 Example04 Information: pfs:test.rgg could not be opened.</div>
<svg class="a" style="left:886px;top:407.5px" width="9" height="5" viewBox="0 0 9 5"><path d="M0.8 0.6h7.4L4.5 4.4Z" fill="#111"/></svg>
<div class="a" style="left:386px;top:422px;width:501px;height:51px;background:#fff;border-top:1px solid #a4a4a4;box-sizing:border-box;"></div>
<div class="a" style="left:386px;top:423.3px;width:501px;height:3px;overflow:hidden;"><div class="msg" style="left:26.3px;top:-7.9px;font-weight:bold;">Information</div></div>
<div class="msg" style="left:388px;top:434px;">pfs:test.rgg could not be opened.</div>
<div class="msg" style="left:388px;top:446.7px;">Found 10 errors.</div>
<div class="msg" style="left:388px;top:459px;"><span style="color:#0000ee;text-decoration:underline;">pfs:test.rgg 79:26 - 79:39</span> :</div>
<div class="a" style="left:887px;top:423.5px;width:10.5px;height:50px;background:#e2e2e2;border-left:1px solid #8c8c8c;box-sizing:border-box;"></div>
<div class="a sbtn" style="left:887px;top:423.5px;width:10.5px;height:9.3px;"></div>
<svg class="a" style="left:889.75px;top:426.05px" width="6" height="4.2" viewBox="0 0 7 5"><path d="M0.3 4.3h6.4L3.5 0.7Z" fill="#111"/></svg>
<div class="a thumb" style="left:887.5px;top:434px;width:10px;height:10.4px;"></div>
<div class="a sbtn" style="left:887px;top:463.5px;width:10.5px;height:10px;"></div>
<svg class="a" style="left:889.75px;top:466.85px" width="6" height="4.2" viewBox="0 0 7 5"><path d="M0.3 0.7h6.4L3.5 4.3Z" fill="#111"/></svg>
<div class="a" style="left:386px;top:473.3px;width:501px;height:10.5px;background:#e2e2e2;border-top:1px solid #8c8c8c;box-sizing:border-box;"></div>
<div class="a sbtn" style="left:387px;top:473.3px;width:10px;height:10.5px;"></div>
<svg class="a" style="left:389.75px;top:475.75px" width="4.2" height="6" viewBox="0 0 5 7"><path d="M4.3 0.3v6.4L0.7 3.5Z" fill="#111"/></svg>
<div class="a thumb" style="left:396.7px;top:474px;width:475.7px;height:9.6px;"></div>
<div class="a sbtn" style="left:877.5px;top:473.3px;width:9.7px;height:10.5px;"></div>
<svg class="a" style="left:880.65px;top:475.75px" width="4.2" height="6" viewBox="0 0 5 7"><path d="M0.7 0.3v6.4L4.3 3.5Z" fill="#111"/></svg>
<div class="a" style="left:887px;top:473.3px;width:10.5px;height:10.5px;background:#e0e0e0;"></div>
<div class="a" style="left:386px;top:484.3px;width:512px;height:1px;background:#a8a8a8;"></div>

<!-- TASKBAR -->
<div class="a" id="taskbar" style="left:0;top:486.7px;width:900px;height:19.3px;background:#0d0e16;"></div>
<svg class="a" style="left:0;top:486px" width="900" height="20" viewBox="0 486 900 20">
<defs>
<radialGradient id="ffx" cx="0.4" cy="0.4" r="0.7"><stop offset="0" stop-color="#ffcf30"/><stop offset="0.6" stop-color="#f07818"/><stop offset="1" stop-color="#c83c10"/></radialGradient>
<radialGradient id="tbd" cx="0.4" cy="0.35" r="0.7"><stop offset="0" stop-color="#6ab0f0"/><stop offset="1" stop-color="#1850b0"/></radialGradient>
</defs>
<rect x="243" y="486.7" width="23.7" height="19.3" fill="#2b2f30"/>
<rect x="75.2" y="504.8" width="17.8" height="1.2" fill="#76a6d6"/>
<rect x="99" y="504.8" width="18.5" height="1.2" fill="#76a6d6"/>
<rect x="124" y="504.8" width="18.0" height="1.2" fill="#76a6d6"/>
<rect x="198" y="504.8" width="17.0" height="1.2" fill="#76a6d6"/>
<rect x="221" y="504.8" width="18.7" height="1.2" fill="#76a6d6"/>
<rect x="243.5" y="504.8" width="22.5" height="1.2" fill="#76a6d6"/>
<path d="M6.3 492.6 L10.8 491.9 V495.9 H6.3Z M11.6 491.8 L17.1 491 V495.9 H11.6Z M6.3 496.6 H10.8 V500.6 L6.3 499.9Z M11.6 496.6 H17.1 V501.5 L11.6 500.7Z" fill="#fff"/>
<circle cx="37.3" cy="494.9" r="3.5" fill="none" stroke="#fff" stroke-width="1.1"/><path d="M34.8 497.5 L30.6 501.3" stroke="#fff" stroke-width="1.2" stroke-linecap="round"/>
<rect x="55.3" y="492.7" width="7.6" height="8" fill="none" stroke="#fff" stroke-width="0.9"/><path d="M53.9 493.8h-1.4v5.8h1.4M64.3 493.8h1.4v5.8h-1.4" fill="none" stroke="#fff" stroke-width="0.9"/>
<path d="M78.6 492.6h4l1 1.2h6.6v7h-11.6z" fill="#f8d050"/><path d="M78.6 495h11.6v5.8h-11.6z" fill="#ffe27a"/><path d="M82.4 497.6h4v3.2h-4z" fill="#38a0e8"/>
<circle cx="108.3" cy="496.3" r="4.8" fill="url(#tbd)"/><path d="M105.2 497 q3-3.6 6.8-1.6 l-.6 3.8 h-5.6z" fill="#eef2f8"/><path d="M104.4 493.6 q3.8-3.6 8-.4" stroke="#9ccaf8" stroke-width="1" fill="none"/>
<circle cx="133.4" cy="496.3" r="5" fill="url(#ffx)"/><circle cx="133.8" cy="495.4" r="2.5" fill="#3858c0"/><path d="M129.4 494.2 q2.4 3.8 6.4 2.4 q-1.2 3.2 -4.6 2.6 q-2.8-1.4-1.8-5z" fill="#f89020"/>
<rect x="152.2" y="491.2" width="7.6" height="10" fill="#1e7a44"/><rect x="159" y="492.4" width="4.4" height="7.6" fill="#2c9458"/><path d="M160.2 494v4.6M161.9 494v4.6" stroke="#e8f4ec" stroke-width="0.8"/><path d="M153.8 493.6l4.2 5.4M158 493.6l-4.2 5.4" stroke="#fff" stroke-width="1.1"/>
<circle cx="182" cy="496.4" r="4.9" fill="#e8b820"/><path d="M182 496.4 L177.8 493.9 A4.9 4.9 0 0 1 186.4 494.2 Z" fill="#d83c30"/><path d="M182 496.4 L177.8 493.9 A4.9 4.9 0 0 0 181.2 501.2 Z" fill="#30a050"/><circle cx="182" cy="496.4" r="2.2" fill="#f4f4f4"/><circle cx="182" cy="496.4" r="1.7" fill="#4a86e8"/>
<rect x="205" y="492" width="7" height="8.6" fill="#e8eef8"/><path d="M207.6 494h3.6M207.6 496h3.6M207.6 498h3.6" stroke="#3a62b0" stroke-width="0.7"/><rect x="201" y="491.2" width="7.2" height="10" fill="#2a56a8"/><path d="M202.2 494 l1 4.6 1.3-4 1.3 4 1-4.6" fill="none" stroke="#fff" stroke-width="0.9"/>
<circle cx="230.7" cy="496.4" r="5" fill="#18a8e8"/><circle cx="227.8" cy="493.4" r="2.4" fill="#18a8e8"/><circle cx="233.6" cy="499.4" r="2.4" fill="#18a8e8"/>
<text x="230.7" y="499.6" font-family="Liberation Sans, sans-serif" font-weight="bold" font-size="8.6" fill="#fff" text-anchor="middle">S</text>
<rect x="249" y="491" width="11.4" height="10.4" fill="#2a8a18"/><path d="M249 491h3l-3 3zM260.4 491h-3l3 3zM249 501.4h3l-3-3zM260.4 501.4h-3l3-3z" fill="#e8f0e0"/><circle cx="254.7" cy="496.2" r="4.6" fill="#0a0a0a"/>
<text x="254.7" y="499.4" font-family="Liberation Sans, sans-serif" font-weight="bold" font-size="8.6" fill="#58e020" text-anchor="middle">G</text>
<path d="M638 491.8h7.8v5.4l-3.9 3.8-3.9-3.8z" fill="#f0d878"/><path d="M640.2 491.8v7.4M641.9 491.8v9M643.6 491.8v7.4" stroke="#c8a030" stroke-width="0.5"/>
<path d="M653.4 494.2 q1.4-2.6 4.6-1.6 q4.4 1 4 4.6 q-.6 3.6-4.4 3.2 q-4.4-.8-4.2-6.2z" fill="#5cb82c"/><path d="M656.2 496.8l1.2 1.2 2.2-2.4" stroke="#e8ffd8" stroke-width="0.7" fill="none"/>
<path d="M668.2 495.6l4.8-3 4.8 3v5.2h-9.6z" fill="#e8ece8"/><path d="M668.4 496l4.6 3 4.6-3" stroke="#8a9a8a" stroke-width="0.5" fill="none"/><rect x="670.6" y="491.6" width="4.8" height="4.4" fill="#38a838"/><path d="M673 492.2v2.8M671.8 494l1.2 1.2 1.2-1.2" stroke="#fff" stroke-width="0.6" fill="none"/>
<rect x="685.6" y="492" width="8" height="6.4" fill="#7a7a7a"/><path d="M685.2 500h2.6M690 500h3.4" stroke="#8a8a8a" stroke-width="1"/><path d="M686.6 498.4l-1 1.4" stroke="#7a7a7a" stroke-width="0.8"/>
<rect x="700" y="491.2" width="10" height="9.8" fill="#3a9ae0"/><path d="M700 499l2-.2v2.2h-2z" fill="#f0c040"/><path d="M704.6 492.8l2 2-1 .2v2l1.8 1.2M703.4 495.6v3.6" stroke="#d8ecfc" stroke-width="0.6" fill="none"/><rect x="700" y="491.2" width="10" height="9.8" fill="none" stroke="#8ccaf8" stroke-width="0.4"/>
<ellipse cx="720.8" cy="496.3" rx="3.7" ry="4.6" fill="#1858c8"/><path d="M719 494.4l3.6 3.4-1.9 1.7v-6.4l1.9 1.7-3.6 3.4" stroke="#fff" stroke-width="0.7" fill="none"/>
<rect x="731.2" y="492" width="10" height="9" fill="#2c2c2c"/><text x="736.2" y="499.4" font-family="Liberation Sans, sans-serif" font-size="6.4" fill="#8a8a8a" text-anchor="middle">8b</text>
<path d="M748.4 497.6 q-1.4-2.6 1.6-3.2 q1-2.8 3.8-1.8 q2.6-.4 2.8 2.2 q2 .8 .8 2.8z" fill="#8cb0d0"/><circle cx="755" cy="498.8" r="2.7" fill="#d82818"/><path d="M754 497.8l2 2M756 497.8l-2 2" stroke="#fff" stroke-width="0.7"/>
<rect x="765.6" y="494" width="7.6" height="4.6" fill="#f4f4f4"/><rect x="766.6" y="495" width="5.6" height="2.6" fill="#0d0e16"/><rect x="767" y="495.2" width="3.6" height="2.2" fill="#f4f4f4"/><path d="M773.4 495.4v1.8M764.4 492.6v3.4M763.2 494h2.4M764.4 496v1.6h1.4" stroke="#f4f4f4" stroke-width="0.8" fill="none"/>
<path d="M779 495.2h1.8l2.6-2.4v7.4l-2.6-2.4h-1.8z" fill="none" stroke="#f4f4f4" stroke-width="0.8"/><path d="M784.8 494.6q1.2 1.8 0 3.6M786.4 493.4q2 3 0 6M788 492.4q2.6 4 0 8" stroke="#f4f4f4" stroke-width="0.7" fill="none"/>
<rect x="797.4" y="493.2" width="7.4" height="5" fill="none" stroke="#f4f4f4" stroke-width="0.9"/><path d="M799 500.6h4.4M801.2 498.4v2" stroke="#f4f4f4" stroke-width="0.9"/><path d="M795.4 492.6v6.8h2M794.4 493.8h2.2" stroke="#f4f4f4" stroke-width="0.8" fill="none"/>
<path d="M810.6 491.2h10.4v7.6h-3.6l-1.6 2.2-1.6-2.2h-3.6z" fill="#fff"/><path d="M812.4 493.2h6.8M812.4 494.9h6.8M812.4 496.6h4.4" stroke="#0d0e16" stroke-width="0.6"/>
<rect x="826.4" y="492.2" width="15" height="8" rx="0.8" fill="none" stroke="#f4f4f4" stroke-width="0.9"/><path d="M828.4 494.4h11M828.4 496.2h11" stroke="#f4f4f4" stroke-width="0.7" stroke-dasharray="1.2 0.6"/><path d="M830 498.2h7.6" stroke="#f4f4f4" stroke-width="0.7"/>
<text x="870.9" y="499.3" font-family="Liberation Sans, sans-serif" font-size="7.6" fill="#fff" text-anchor="middle" letter-spacing="-0.15">23:18</text>
<path d="M897.6 487v19" stroke="#4a4a4a" stroke-width="0.6"/>
</svg>

</body>
</html>
